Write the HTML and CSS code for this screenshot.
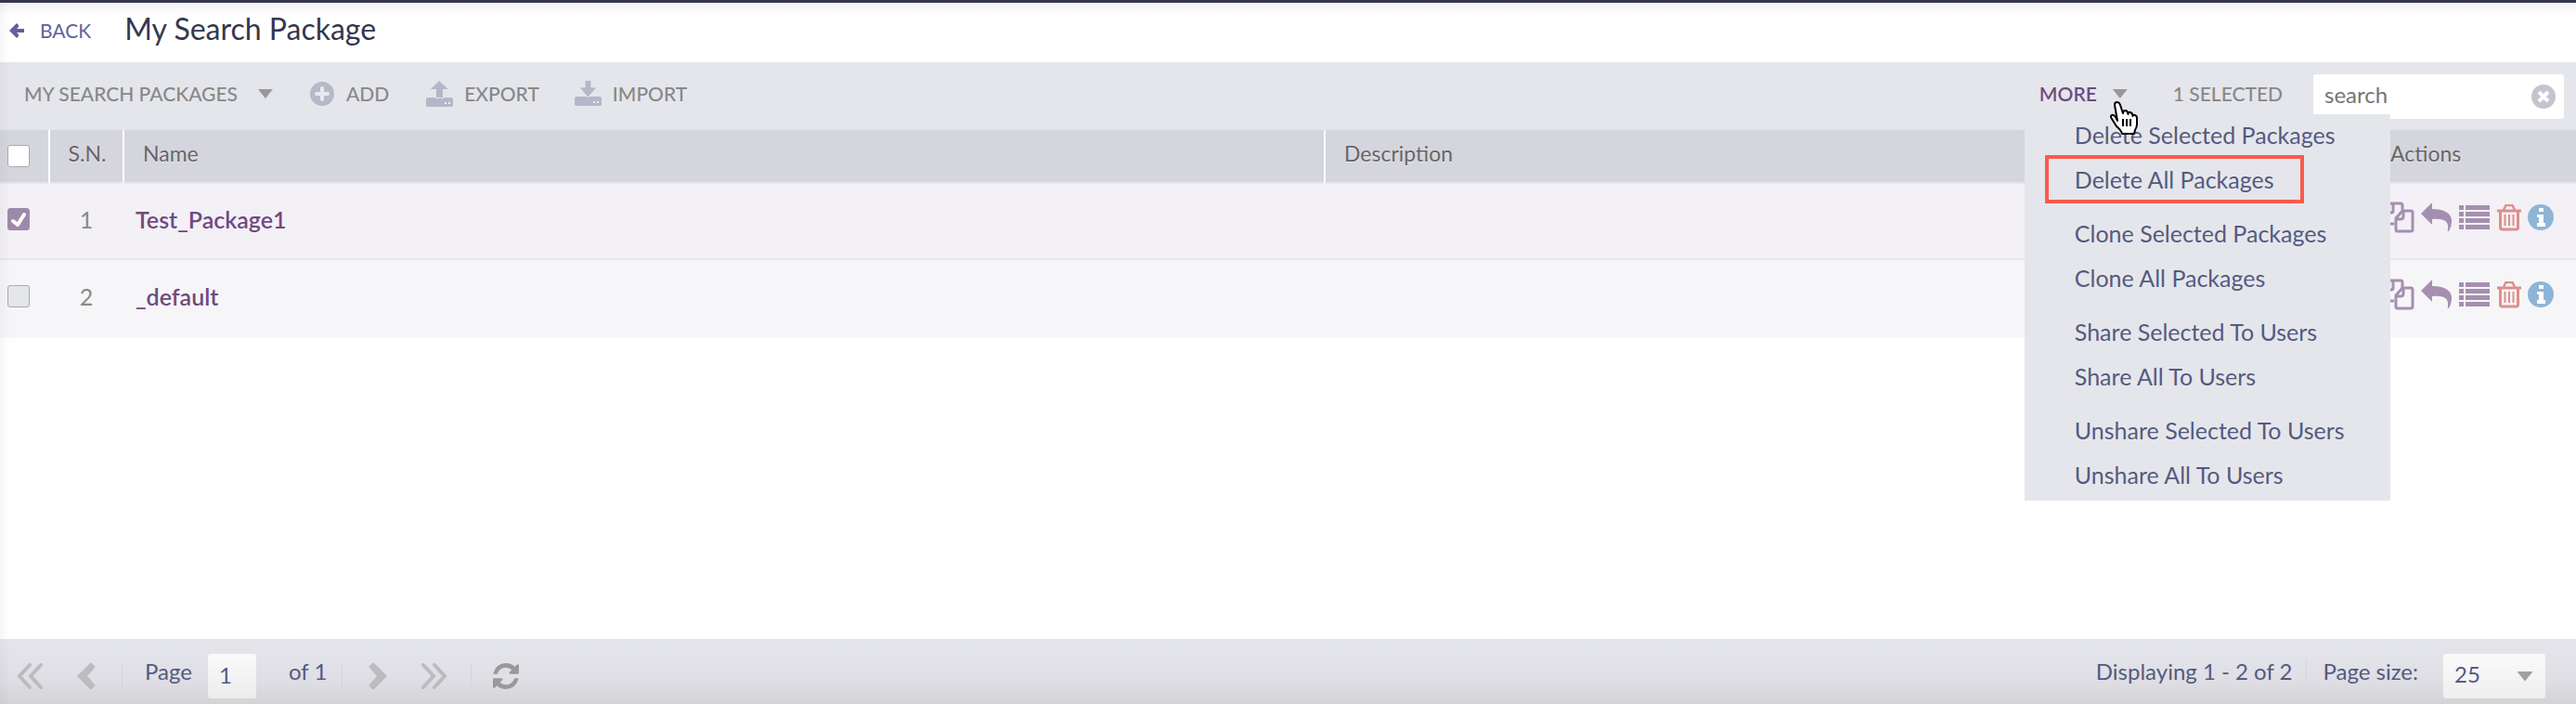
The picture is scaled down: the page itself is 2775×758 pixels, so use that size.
FILE: index.html
```html
<!DOCTYPE html>
<html lang="en">
<head>
<meta charset="utf-8">
<title>My Search Package</title>
<link rel="stylesheet" href="styles.css">
</head>
<body>
<svg class="sprite" aria-hidden="true">
  <symbol id="i-copy" viewBox="0 0 42 34">
    <g fill="none" stroke="currentColor" stroke-width="3" stroke-linejoin="round">
      <path d="M20 24H3V11l9-9h15q2 0 2 2v6M19 2v8q0 2-2 2H3"/>
      <path d="M29 10h9q2 0 2 2v18q0 2-2 2H24q-2 0-2-2V18zM30 10v6q0 3-3 3h-5"/>
    </g>
  </symbol>
  <symbol id="i-reply" viewBox="0 0 34 30">
    <path fill="currentColor" d="M0 11L11 0q1-1 1 1v5c13 0 22 5 21 14q0 5-3 10q-2 0-1-2c1-8-3-12-17-11v5q0 1-1 0z"/>
  </symbol>
  <symbol id="i-list" viewBox="0 0 34 28">
    <path fill="currentColor" d="M0 1h5v5H0zM7 1h26v5H7zM0 8h5v5H0zM7 8h26v5H7zM0 15h5v5H0zM7 15h26v5H7zM0 22h5v5H0zM7 22h26v5H7z"/>
  </symbol>
  <symbol id="i-trash" viewBox="0 0 26 29">
    <g fill="none" stroke="currentColor">
      <path stroke-width="3" d="M0 7h26M3.500 7v18q0 2 2 2h15q2 0 2-2V7"/>
      <path stroke-width="2.500" d="M7 6l2-4q0-1 1-1h6q1 0 1 1l2 4"/>
      <path stroke-width="2" d="M8.500 11v12M13 11v12M17.500 11v12"/>
    </g>
  </symbol>
  <symbol id="i-info" viewBox="0 0 28 28">
    <circle cx="14" cy="14" r="14" fill="currentColor"/>
    <path fill="#fff" d="M12 4h5v4h-5zM10 11h7v9h2v4h-9v-4h2v-6h-2z"/>
  </symbol>
  <symbol id="i-double" viewBox="0 0 28 28">
    <path fill="none" stroke="currentColor" stroke-width="4" stroke-linecap="round" d="M14 2L3 14l11 12M26 2L15 14l11 12"/>
  </symbol>
  <symbol id="i-single" viewBox="0 0 20 30">
    <path fill="currentColor" d="M14 1q1-1 2 0l3 3q1 1 0 2l-8 9 8 9q1 1 0 2l-3 3q-1 1-2 0L0 15z"/>
  </symbol>
</svg>

<div class="page">
  <header class="title-bar">
    <a class="back" href="#">
      <svg width="16" height="16" viewBox="0 0 16 16"><path fill="currentColor" d="M0 8L8 0l2 2v2L8 6h8v4H8l2 2v2l-2 2z"/></svg>
      BACK
    </a>
    <h1>My Search Package</h1>
  </header>

  <div class="toolbar">
    <button class="tool packages" type="button">MY SEARCH PACKAGES <span class="caret"></span></button>
    <button class="tool add" type="button">
      <svg width="28" height="28" viewBox="0 0 28 28"><circle cx="14" cy="14" r="13" fill="#b7b8c8"/><path d="M14 8v12M8 14h12" stroke="#e9e9ef" stroke-width="4" stroke-linecap="round"/></svg>
      ADD
    </button>
    <button class="tool export" type="button">
      <svg width="29" height="28" viewBox="0 0 29 28"><path fill="#b5b7c8" d="M14 0l10 9h-6v9q0 1-1 1h-5q-1 0-1-1V9H5z"/><rect y="18" width="29" height="10" rx="2" fill="#b5b7c8"/><path d="M10 18.500h9" stroke="#e5e6eb"/><path fill="#eee" d="M20 23h2v2h-2zM24 23h2v2h-2z"/></svg>
      EXPORT
    </button>
    <button class="tool import" type="button">
      <svg width="29" height="28" viewBox="0 0 29 28"><rect y="17" width="29" height="10" rx="2" fill="#b5b7c8"/><path fill="#b5b7c8" stroke="#e5e6eb" d="M11 -1h7v8h6l-9.500 11L5 7h6z"/><path fill="#eee" d="M20 22h2v2h-2zM24 22h2v2h-2z"/></svg>
      IMPORT
    </button>

    <div class="more">
      <button class="tool more-button" type="button" aria-expanded="true">MORE <span class="caret"></span></button>
      <div class="menu">
        <div class="group">
          <button type="button">Delete Selected Packages</button>
          <button type="button" class="marked">Delete All Packages</button>
        </div>
        <div class="group">
          <button type="button">Clone Selected Packages</button>
          <button type="button">Clone All Packages</button>
        </div>
        <div class="group">
          <button type="button">Share Selected To Users</button>
          <button type="button">Share All To Users</button>
        </div>
        <div class="group">
          <button type="button">Unshare Selected To Users</button>
          <button type="button">Unshare All To Users</button>
        </div>
      </div>
      <svg class="pointer" width="32" height="36" viewBox="0 0 32 36"><path fill="#fff" stroke="#000" stroke-width="2" stroke-linejoin="round" d="M9 21L6 4q0-3 2.500-3T12 4l3 9q0-3 2.500-3t3 4q0-3 2.500-2t2.500 4q0-2 2.500-1t2 4v6q0 3-2 6l-1 4H14q-1-4-6-8l-5-8q-2-3 0-4t4 2z"/><path stroke="#000" stroke-width="2" d="M15 19v8M19 19v8M23 19v8"/></svg>
    </div>
    <span class="tool selected">1 SELECTED</span>
    <div class="search">
      <input type="text" placeholder="search" aria-label="Search packages">
      <button type="button" aria-label="Clear search">
        <svg width="28" height="28" viewBox="0 0 28 28"><circle cx="14" cy="14" r="13" fill="#c4c4d1"/><path d="M9 9l10 10M19 9L9 19" stroke="#fff" stroke-width="4"/></svg>
      </button>
    </div>
  </div>

  <table class="grid">
    <thead>
      <tr>
        <th class="c-check"><label class="check"><input type="checkbox" aria-label="Select all"></label></th>
        <th class="c-sn">S.N.</th>
        <th class="c-name">Name</th>
        <th class="c-desc">Description</th>
        <th class="c-actions">Actions</th>
      </tr>
    </thead>
    <tbody>
      <tr class="chosen">
        <td class="c-check"><label class="check"><input type="checkbox" aria-label="Select Test_Package1" checked><svg width="24" height="24" viewBox="0 0 24 24"><path fill="none" stroke="#fff" stroke-width="4" stroke-linecap="round" stroke-linejoin="round" d="M6 14l5 4 7-11"/></svg></label></td>
        <td class="c-sn">1</td>
        <td class="c-name"><a href="#">Test_Package1</a></td>
        <td class="c-desc"></td>
        <td class="c-actions"><div class="actions">
          <button type="button" aria-label="Clone"><svg width="42" height="34"><use href="#i-copy"/></svg></button>
          <button type="button" aria-label="Share"><svg width="34" height="30"><use href="#i-reply"/></svg></button>
          <button type="button" aria-label="List"><svg width="34" height="28"><use href="#i-list"/></svg></button>
          <button type="button" class="delete" aria-label="Delete"><svg width="26" height="29"><use href="#i-trash"/></svg></button>
          <button type="button" class="info" aria-label="Info"><svg width="28" height="28"><use href="#i-info"/></svg></button>
        </div></td>
      </tr>
      <tr>
        <td class="c-check"><label class="check"><input type="checkbox" aria-label="Select _default"></label></td>
        <td class="c-sn">2</td>
        <td class="c-name"><a href="#">_default</a></td>
        <td class="c-desc"></td>
        <td class="c-actions"><div class="actions">
          <button type="button" aria-label="Clone"><svg width="42" height="34"><use href="#i-copy"/></svg></button>
          <button type="button" aria-label="Share"><svg width="34" height="30"><use href="#i-reply"/></svg></button>
          <button type="button" aria-label="List"><svg width="34" height="28"><use href="#i-list"/></svg></button>
          <button type="button" class="delete" aria-label="Delete"><svg width="26" height="29"><use href="#i-trash"/></svg></button>
          <button type="button" class="info" aria-label="Info"><svg width="28" height="28"><use href="#i-info"/></svg></button>
        </div></td>
      </tr>
    </tbody>
  </table>

  <footer class="pager">
    <div class="steps">
      <button type="button" aria-label="First page"><svg width="28" height="28"><use href="#i-double"/></svg></button>
      <button type="button" aria-label="Previous page"><svg width="20" height="30"><use href="#i-single"/></svg></button>
    </div>
    <label class="page-box">Page <input type="text" value="1"></label>
    <span class="total">of 1</span>
    <div class="steps forward">
      <button type="button" aria-label="Next page"><svg class="flip" width="20" height="30"><use href="#i-single"/></svg></button>
      <button type="button" aria-label="Last page"><svg class="flip" width="28" height="28"><use href="#i-double"/></svg></button>
    </div>
    <button type="button" class="refresh" aria-label="Refresh"><svg width="28" height="28" viewBox="128 128 1536 1536"><path fill="currentColor" d="M1639 1056q0 5-1 7-64 268-268 434.500t-478 166.500q-146 0-282.500-55t-243.500-157l-129 129q-19 19-45 19t-45-19-19-45v-448q0-26 19-45t45-19h448q26 0 45 19t19 45-19 45l-137 137q71 66 161 102t187 36q134 0 250-65t186-179q11-17 53-117 8-23 30-23h192q13 0 22.500 9.500t9.500 22.500zm25-800v448q0 26-19 45t-45 19h-448q-26 0-45-19t-19-45 19-45l138-138q-148-137-349-137-134 0-250 65t-186 179q-11 17-53 117-8 23-30 23h-199q-13 0-22.500-9.500t-9.500-22.500v-7q65-268 270-434.500t480-166.500q146 0 284 55.500t245 156.500l130-129q19-19 45-19t45 19 19 45z"/></svg></button>
    <span class="status">Displaying 1 - 2 of 2</span>
    <div class="size">
      <label for="page-size">Page size:</label>
      <span class="select"><select id="page-size"><option>25</option></select><span class="caret wide"></span></span>
    </div>
  </footer>
</div>
</body>
</html>
```
FILE: styles.css
```css
* { box-sizing: border-box; }

body {
  margin: 0;
  background: #fff;
  color: #8a8a8a;
  font: 23px/28px Lato, "Open Sans", sans-serif;
}

button, input, select { font: inherit; color: inherit; }
button { border: 0; padding: 0; background: none; cursor: pointer; }
svg { display: block; flex: none; }
.sprite { position: absolute; width: 0; height: 0; }

.page {
  position: relative;
  display: flex;
  flex-direction: column;
  min-height: 100vh;
  border-top: 3px solid #35374f;
}
.page::after {
  content: "";
  position: absolute;
  inset: 0 auto 0 0;
  width: 12px;
  background: linear-gradient(90deg, rgba(0, 0, 0, .03), transparent);
  pointer-events: none;
}

.title-bar {
  display: flex;
  align-items: center;
  gap: 36px;
  height: 64px;
  padding: 0 10px 4px;
  background: linear-gradient(#f2f2f2, #fff 14px);
}
.back {
  display: flex;
  align-items: center;
  gap: 17px;
  color: #5e6399;
  font-size: 21px;
  text-decoration: none;
}
h1 { margin: 0 0 4px; color: #35374f; font-size: 32px; font-weight: 400; }

.toolbar {
  display: flex;
  align-items: center;
  height: 73px;
  padding: 0 13px 0 26px;
  background: #e5e6eb;
}
.tool {
  display: flex;
  align-items: center;
  gap: 12px;
  height: 28px;
  margin-bottom: 5px;
  color: #888;
  font-size: 21px;
  font-weight: 500;
  white-space: nowrap;
}
.packages { gap: 22px; margin-right: 39px; }
.add { margin-right: 40px; }
.export { margin-right: 38px; }
.caret {
  width: 16px;
  height: 10px;
  background: #999;
  clip-path: polygon(0 0, 100% 0, 50% 100%);
}
.caret.wide { width: 18px; height: 11px; background: #a0a0a0; }

.more { position: relative; margin-left: auto; padding-left: 16px; }
.more-button { gap: 17px; color: #704a80; font-weight: 600; }
.selected { margin: 0 33px 5px 49px; }
.pointer { position: absolute; left: 91px; top: 22px; z-index: 3; }
.menu {
  position: absolute;
  left: 0;
  top: 36px;
  z-index: 2;
  display: grid;
  gap: 10px;
  width: 394px;
  padding-bottom: 4px;
  background: #e5e6eb;
}
.group { display: grid; justify-items: start; }
.group:first-child { margin-top: -2px; }
.menu button {
  height: 48px;
  margin-left: 24px;
  padding: 0 30px;
  color: #545a80;
  font-size: 25px;
  white-space: nowrap;
}
.menu .marked { outline: 4px solid #fb5a4c; outline-offset: -2px; }

.search {
  display: flex;
  align-items: center;
  width: 270px;
  height: 48px;
  padding: 0 8px 0 12px;
  border-radius: 3px;
  background: #fff;
}
.search input {
  flex: 1;
  min-width: 0;
  padding: 0 0 4px;
  border: 0;
  outline: 0;
  background: none;
  font-size: 24px;
}
.search input::placeholder { color: #757575; opacity: 1; }

.grid { width: 100%; border-spacing: 0; table-layout: fixed; text-align: left; }
.grid th, .grid td { padding: 0; border-bottom: 2px solid #e6e6ec; vertical-align: middle; }
.grid th {
  height: 58px;
  padding-bottom: 6px;
  background: #d5d5de;
  color: #666;
  font-weight: 400;
  text-shadow: 0 1px 0 #eee;
}
.grid th.c-check { padding-bottom: 0; }
.grid td { height: 84px; padding-bottom: 4px; background: #f6f6f8; font-size: 25px; }
.grid .chosen td { height: 82px; background: #f3f0f6; }
.grid tbody tr:last-child td { border-bottom-color: #f6f6f8; }
.grid th.c-sn, .grid th.c-name, .grid th.c-desc { border-left: 2px solid #fff; }
.grid .c-check { width: 52px; padding-left: 8px; }
.grid .c-sn { width: 80px; padding-left: 2px; text-align: center; }
.grid .c-name { width: 1294px; padding-left: 20px; }
.grid td.c-name { padding-left: 14px; }
.grid .c-desc { padding-left: 20px; }
.grid .c-actions { width: 220px; padding-left: 20px; }
.grid td.c-actions { padding-left: 4px; }
.grid a { color: #704a80; font-weight: 600; text-decoration: none; }

.check { display: grid; width: 24px; }
.check > * { grid-area: 1 / 1; }
.check input {
  appearance: none;
  width: 24px;
  height: 24px;
  margin: 0;
  border: 1px solid #aaa;
  border-radius: 3px;
  background: #fff;
}
td .check input { background: #e5e6eb; }
td .check input:checked { border-color: #9f89ab; background: #9f89ab; }

.actions { display: flex; align-items: center; gap: 7px; padding-bottom: 4px; color: #a58fb0; }
.actions .delete { color: #de8f8a; }
.actions .info { color: #8fb5d6; }

.pager {
  display: flex;
  align-items: center;
  height: 70px;
  margin-top: auto;
  padding: 0 33px 0 18px;
  background: linear-gradient(#e5e6eb, #dfdfe5 60%, #d3d3d8);
  color: #545a80;
  font-size: 24px;
}
.pager > * { white-space: nowrap; }
.steps { display: flex; align-items: center; gap: 37px; height: 28px; margin-top: 10px; padding-right: 28px; border-right: 1px solid #d5d6d8; color: #bbbcbf; }
.steps.forward { padding: 0 25px 0 28px; margin-left: 16px; border-left: 1px solid #d5d6d8; }
.flip { transform: scaleX(-1); }
.page-box { display: flex; align-items: center; gap: 17px; padding-left: 24px; }
.page-box input {
  width: 52px;
  height: 48px;
  margin-top: 10px;
  padding: 0 0 4px 12px;
  border: 0;
  border-radius: 3px;
  background: linear-gradient(#fafafa, #ececec);
}
.total { margin-left: 35px; }
.refresh { margin: 10px 0 0 23px; color: #999; }
.status { margin-left: auto; padding-right: 15px; border-right: 1px solid #d5d6d8; }
.size { display: flex; align-items: center; gap: 27px; padding-left: 17px; }
.select { display: grid; align-items: center; margin-top: 10px; }
.select > * { grid-area: 1 / 1; }
.select select {
  appearance: none;
  width: 110px;
  height: 48px;
  padding: 0 12px 4px;
  border: 0;
  border-radius: 3px;
  background: linear-gradient(#fafafa, #efefef);
}
.select .caret { justify-self: end; margin-right: 13px; pointer-events: none; }
```
